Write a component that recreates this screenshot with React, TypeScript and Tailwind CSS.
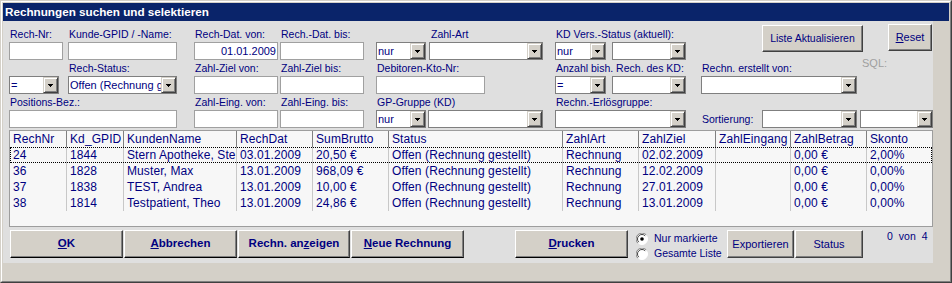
import React from "react";

const LBL =
  "h-[16px] leading-[17px] text-[10.5px] text-[#000080] whitespace-nowrap pl-[1px]";

function Arrow() {
  return (
    <div className="w-[15px] h-full shrink-0 bg-[#d4d0c8] border border-t-[#d4d0c8] border-l-[#d4d0c8] border-r-[#404040] border-b-[#404040] shadow-[inset_1px_1px_0_#ffffff,inset_-1px_-1px_0_#808080] flex items-center justify-center">
      <svg width="5" height="3" viewBox="0 0 5 3" shapeRendering="crispEdges">
        <rect x="0" y="0" width="5" height="1" fill="#000" />
        <rect x="1" y="1" width="3" height="1" fill="#000" />
        <rect x="2" y="2" width="1" height="1" fill="#000" />
      </svg>
    </div>
  );
}

function Combo({ cls, text = "" }: { cls: string; text?: string }) {
  return (
    <div className={`h-[18px] shrink-0 bg-white border border-[#7f7f7f] flex ${cls}`}>
      <div className="flex-1 min-w-0 overflow-hidden whitespace-nowrap pl-[1px] text-[11px] leading-[16px] text-[#000080]">
        {text}
      </div>
      <Arrow />
    </div>
  );
}

function Input({ cls, value = "" }: { cls: string; value?: string }) {
  return (
    <div
      className={`h-[18px] shrink-0 bg-white border border-[#a0a0a0] text-[11px] leading-[16px] text-right pr-[1px] text-[#000080] ${cls}`}
    >
      {value}
    </div>
  );
}

function Field({
  cls,
  label,
  children,
}: {
  cls: string;
  label: string;
  children: React.ReactNode;
}) {
  return (
    <div className={`flex flex-col shrink-0 ${cls}`}>
      <div className={LBL}>{label}</div>
      {children}
    </div>
  );
}

function Btn({
  cls,
  dark = false,
  children,
}: {
  cls: string;
  dark?: boolean;
  children: React.ReactNode;
}) {
  return (
    <div
      className={`shrink-0 bg-[#d4d0c8] border border-t-white border-l-white ${
        dark ? "border-r-[#404040] border-b-black" : "border-r-[#404040] border-b-[#404040]"
      } shadow-[inset_-1px_-1px_0_#808080] flex items-center justify-center text-[#000080] whitespace-nowrap ${cls}`}
    >
      {children}
    </div>
  );
}

function Radio({ checked }: { checked?: boolean }) {
  return (
    <svg width="12" height="12" viewBox="0 0 12 12" className="shrink-0">
      <circle cx="6" cy="6" r="5.5" fill="#ffffff" stroke="#ffffff" />
      <path d="M1.8 10.2 A5.5 5.5 0 0 1 10.2 1.8" fill="none" stroke="#808080" strokeWidth="1" />
      <path d="M2.8 9.2 A4.3 4.3 0 0 1 9.2 2.8" fill="none" stroke="#404040" strokeWidth="1" />
      {checked && <circle cx="6" cy="6" r="1.8" fill="#000" />}
    </svg>
  );
}

const headerCols = [
  { w: "w-[57px]", t: "RechNr" },
  { w: "w-[57px]", t: "Kd_GPID" },
  { w: "w-[113px]", t: "KundenName" },
  { w: "w-[76px]", t: "RechDat" },
  { w: "w-[76px]", t: "SumBrutto" },
  { w: "w-[174px]", t: "Status" },
  { w: "w-[76px]", t: "ZahlArt" },
  { w: "w-[77px]", t: "ZahlZiel" },
  { w: "w-[75px]", t: "ZahlEingang" },
  { w: "w-[76px]", t: "ZahlBetrag" },
  { w: "flex-1", t: "Skonto" },
];

const rows = [
  ["24", "1844", "Stern Apotheke, Stern", "03.01.2009", "20,50 €", "Offen (Rechnung gestellt)", "Rechnung", "02.02.2009", "", "0,00 €", "2,00%"],
  ["36", "1828", "Muster, Max", "13.01.2009", "968,09 €", "Offen (Rechnung gestellt)", "Rechnung", "12.02.2009", "", "0,00 €", "0,00%"],
  ["37", "1838", "TEST, Andrea", "13.01.2009", "10,00 €", "Offen (Rechnung gestellt)", "Rechnung", "27.01.2009", "", "0,00 €", "0,00%"],
  ["38", "1814", "Testpatient, Theo", "13.01.2009", "24,86 €", "Offen (Rechnung gestellt)", "Rechnung", "13.01.2009", "", "0,00 €", "0,00%"],
];

export default function App() {
  return (
    <div className="w-[952px] h-[283px] border border-t-[#d4d0c8] border-l-[#d4d0c8] border-r-[#404040] border-b-[#404040] font-['Liberation_Sans',Arial,sans-serif]">
      <div className="w-full h-full border border-t-white border-l-white border-r-[#808080] border-b-[#808080] bg-[#d4d0c8] p-[1px] flex flex-col">
        <div className="h-[18px] shrink-0 bg-[#0a246a] text-white font-bold text-[11.7px] leading-[18px] pl-[2px] whitespace-nowrap">
          Rechnungen suchen und selektieren
        </div>
        <div className="flex flex-1 min-h-0 items-start">
          <div className="w-[930px] h-[242px] shrink-0 bg-[#dfdfdf] flex flex-col pt-[5px]">
            {/* Row 1 */}
            <div className="flex items-start h-[34px]">
              <Field cls="ml-[6px] w-[54px]" label="Rech-Nr:">
                <Input cls="w-full" />
              </Field>
              <Field cls="ml-[5px] w-[109px]" label="Kunde-GPID / -Name:">
                <Input cls="w-full" />
              </Field>
              <Field cls="ml-[17px] w-[84px]" label="Rech-Dat. von:">
                <Input cls="w-full" value="01.01.2009" />
              </Field>
              <Field cls="ml-[2px] w-[84px]" label="Rech.-Dat. bis:">
                <Input cls="w-full" />
              </Field>
              <div className="ml-[12px] flex flex-col shrink-0">
                <div className={`${LBL} pl-[55px]`}>Zahl-Art</div>
                <div className="flex">
                  <Combo cls="w-[50px]" text="nur" />
                  <Combo cls="ml-[3px] w-[114px]" />
                </div>
              </div>
              <div className="ml-[12px] flex flex-col shrink-0">
                <div className={LBL}>KD Vers.-Status (aktuell):</div>
                <div className="flex">
                  <Combo cls="w-[51px]" text="nur" />
                  <Combo cls="ml-[6px] w-[74px]" />
                </div>
              </div>
              <Btn cls="ml-[76px] -mt-[1px] w-[101px] h-[27px] text-[10.5px]">Liste Aktualisieren</Btn>
              <Btn cls="ml-[25px] -mt-[2px] w-[44px] h-[27px] text-[11px]">
                <span>
                  <span className="underline">R</span>eset
                </span>
              </Btn>
            </div>

            {/* Row 2 */}
            <div className="flex items-start h-[34px]">
              <Field cls="ml-[6px] w-[50px]" label="">
                <Combo cls="w-full" text="=" />
              </Field>
              <Field cls="ml-[9px] w-[109px]" label="Rech-Status:">
                <Combo cls="w-full" text="Offen (Rechnung gestellt)" />
              </Field>
              <Field cls="ml-[17px] w-[84px]" label="Zahl-Ziel von:">
                <Input cls="w-full" />
              </Field>
              <Field cls="ml-[2px] w-[84px]" label="Zahl-Ziel bis:">
                <Input cls="w-full" />
              </Field>
              <Field cls="ml-[12px] w-[109px]" label="Debitoren-Kto-Nr:">
                <Input cls="w-full" />
              </Field>
              <div className="ml-[70px] flex flex-col shrink-0">
                <div className={LBL}>Anzahl bish. Rech. des KD:</div>
                <div className="flex">
                  <Combo cls="w-[51px]" text="=" />
                  <Combo cls="ml-[6px] w-[74px]" />
                </div>
              </div>
              <Field cls="ml-[15px] w-[156px]" label="Rechn. erstellt von:">
                <Combo cls="w-full" />
              </Field>
              <div className="ml-[5px] -mt-[5px] text-[11px] leading-[16px] text-[#a0a0a0]">SQL:</div>
            </div>

            {/* Row 3 */}
            <div className="flex items-start h-[34px]">
              <Field cls="ml-[6px] w-[168px]" label="Positions-Bez.:">
                <Input cls="w-full" />
              </Field>
              <Field cls="ml-[17px] w-[84px]" label="Zahl-Eing. von:">
                <Input cls="w-full" />
              </Field>
              <Field cls="ml-[2px] w-[84px]" label="Zahl-Eing. bis:">
                <Input cls="w-full" />
              </Field>
              <div className="ml-[12px] flex flex-col shrink-0">
                <div className={LBL}>GP-Gruppe (KD)</div>
                <div className="flex">
                  <Combo cls="w-[50px]" text="nur" />
                  <Combo cls="ml-[2px] w-[115px]" />
                </div>
              </div>
              <Field cls="ml-[12px] w-[131px]" label="Rechn.-Erlösgruppe:">
                <Combo cls="w-full" />
              </Field>
              <div className="ml-[16px] flex flex-col shrink-0">
                <div className="h-[16px]" />
                <div className="flex">
                  <div className="w-[60px] h-[18px] text-[10.5px] leading-[18px] text-[#000080] whitespace-nowrap">
                    Sortierung:
                  </div>
                  <Combo cls="w-[95px]" />
                  <Combo cls="ml-[3px] w-[73px]" />
                </div>
              </div>
            </div>

            {/* Table */}
            <div className="ml-[6px] mt-[2px] w-[924px] h-[97px] shrink-0 border border-[#9d9d9d] bg-[#f7f7f7] flex flex-col text-[12px] tracking-[0.1px] text-[#000080]">
              <div className="flex h-[16px] shrink-0">
                {headerCols.map((c, i) => (
                  <div
                    key={i}
                    className={`${c.w} shrink-0 h-full leading-[16px] pl-[3px] overflow-hidden whitespace-nowrap ${
                      i < headerCols.length - 1 ? "border-r border-[#808080]" : ""
                    }`}
                  >
                    {c.t}
                  </div>
                ))}
              </div>
              {rows.map((r, ri) => (
                <div
                  key={ri}
                  className={`flex h-[16px] shrink-0 ${
                    ri === 0 ? "outline-1 outline-dotted outline-black -outline-offset-1" : ""
                  }`}
                >
                  {r.map((v, i) => (
                    <div
                      key={i}
                      className={`${headerCols[i].w} shrink-0 h-full leading-[16px] pl-[3px] overflow-hidden whitespace-nowrap ${
                        i < r.length - 1 ? "border-r border-[#c8c8c8]" : ""
                      }`}
                    >
                      {v}
                    </div>
                  ))}
                </div>
              ))}
            </div>

            {/* Bottom buttons */}
            <div className="flex items-start h-[28px] mt-[3px] shrink-0">
              <Btn dark cls="ml-[7px] w-[113px] h-[28px] text-[11.5px] font-bold">
                <span>
                  <span className="underline">O</span>K
                </span>
              </Btn>
              <Btn dark cls="ml-[1px] w-[113px] h-[28px] text-[11.5px] font-bold">
                <span>
                  <span className="underline">A</span>bbrechen
                </span>
              </Btn>
              <Btn dark cls="ml-[1px] w-[112px] h-[28px] text-[11.5px] font-bold">
                <span>
                  Rechn. an<span className="underline">z</span>eigen
                </span>
              </Btn>
              <Btn dark cls="ml-[1px] w-[113px] h-[28px] text-[11.5px] font-bold">
                <span>
                  <span className="underline">N</span>eue Rechnung
                </span>
              </Btn>
              <Btn dark cls="ml-[51px] w-[113px] h-[28px] text-[11.5px] font-bold">
                <span>
                  <span className="underline">D</span>rucken
                </span>
              </Btn>
              <div className="ml-[8px] w-[91px] mt-[1px] flex flex-col shrink-0 text-[10.5px] text-[#000080]">
                <div className="h-[15px] flex items-center gap-[6px] leading-[15px] whitespace-nowrap">
                  <Radio checked />
                  <span>Nur markierte</span>
                </div>
                <div className="h-[15px] flex items-center gap-[6px] leading-[15px] whitespace-nowrap">
                  <Radio />
                  <span>Gesamte Liste</span>
                </div>
              </div>
              <Btn cls="w-[67px] h-[28px] text-[11px]">Exportieren</Btn>
              <Btn cls="ml-[1px] w-[68px] h-[28px] text-[11px]">Status</Btn>
              <div className="ml-[24px] -mt-[2px] flex gap-[6px] text-[10.5px] leading-[16px] text-[#000080]">
                <span>0</span>
                <span>von</span>
                <span>4</span>
              </div>
            </div>
          </div>
        </div>
      </div>
    </div>
  );
}
